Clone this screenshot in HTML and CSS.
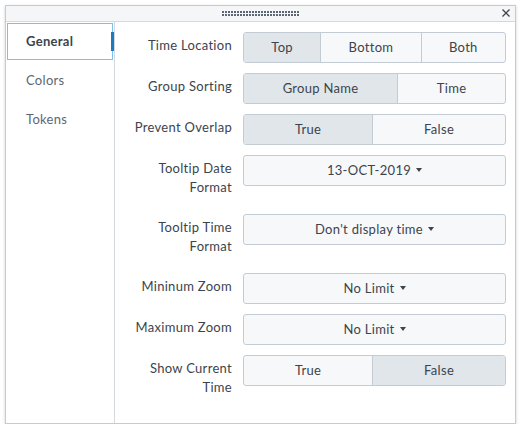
FILE: index.html
```html
<!DOCTYPE html>
<html>
<head>
<meta charset="utf-8">
<link rel="stylesheet" href="styles.css">
</head>
<body>
<div class="panel">
  <div class="header">
    <div class="grip"></div>
    <button class="close" aria-label="Close">
      <svg width="8" height="8" viewBox="0 0 8 8"><path d="M0.5 0.5 L7.5 7.5 M7.5 0.5 L0.5 7.5" stroke="#3c444d" stroke-width="1.3" fill="none"/></svg>
    </button>
  </div>
  <div class="body">
    <div class="sidebar">
      <div class="tab active">General</div>
      <div class="tab">Colors</div>
      <div class="tab">Tokens</div>
    </div>
    <div class="content">
      <div class="row">
        <div class="label">Time Location</div>
        <div class="group">
          <div class="opt selected">Top</div>
          <div class="opt">Bottom</div>
          <div class="opt">Both</div>
        </div>
      </div>
      <div class="row">
        <div class="label">Group Sorting</div>
        <div class="group">
          <div class="opt selected">Group Name</div>
          <div class="opt">Time</div>
        </div>
      </div>
      <div class="row">
        <div class="label">Prevent Overlap</div>
        <div class="group">
          <div class="opt selected">True</div>
          <div class="opt">False</div>
        </div>
      </div>
      <div class="row">
        <div class="label">Tooltip Date<br>Format</div>
        <div class="select">13-OCT-2019<span class="caret"></span></div>
      </div>
      <div class="row">
        <div class="label">Tooltip Time<br>Format</div>
        <div class="select">Don't display time<span class="caret"></span></div>
      </div>
      <div class="row">
        <div class="label">Mininum Zoom</div>
        <div class="select">No Limit<span class="caret"></span></div>
      </div>
      <div class="row">
        <div class="label">Maximum Zoom</div>
        <div class="select">No Limit<span class="caret"></span></div>
      </div>
      <div class="row">
        <div class="label">Show Current<br>Time</div>
        <div class="group">
          <div class="opt">True</div>
          <div class="opt selected">False</div>
        </div>
      </div>
    </div>
  </div>
</div>
</body>
</html>
```
FILE: styles.css
```css
html, body {
  margin: 0;
  padding: 0;
  background: #ffffff;
}
body {
  font-family: Lato, "Liberation Sans", sans-serif;
  font-size: 13px;
  letter-spacing: 0.3px;
  color: #3c444d;
}
.panel {
  box-sizing: border-box;
  margin: 5px 0 0 5px;
  width: 511px;
  height: 419px;
  border: 1px solid #c3cbd4;
  box-shadow: 0 1px 3px rgba(0, 0, 0, 0.18);
  background: #ffffff;
  display: flex;
  flex-direction: column;
}
.header {
  height: 15px;
  border-bottom: 1px solid #d3d9df;
  background: #f5f6f8;
  display: flex;
  align-items: center;
  justify-content: center;
  position: relative;
}
.grip {
  width: 78px;
  height: 6px;
  background-image: radial-gradient(circle at 1px 1px, #5c6773 0.75px, transparent 1px);
  background-size: 3px 3px;
}
.close {
  position: absolute;
  right: 5px;
  top: 3px;
  width: 8px;
  height: 8px;
  padding: 0;
  border: 0;
  background: none;
  display: flex;
}
.body {
  flex: 1;
  display: flex;
}
.sidebar {
  width: 108px;
  border-right: 1px solid #d3d9df;
  display: flex;
  flex-direction: column;
}
.tab {
  position: relative;
  margin: 1px;
  height: 37px;
  box-sizing: border-box;
  border: 1px solid transparent;
  padding: 0 0 2px 18px;
  display: flex;
  align-items: center;
  color: #5c6773;
}
.tab.active {
  border-color: #7cc0ee;
  color: #3c444d;
  font-weight: 700;
}
.tab.active::after {
  content: "";
  position: absolute;
  right: -2px;
  top: 8px;
  width: 3px;
  height: 19px;
  background: #1a7bbd;
}
.content {
  flex: 1;
  padding: 10px 9px 0 0;
  display: flex;
  flex-direction: column;
  gap: 10px;
}
.row {
  display: grid;
  grid-template-columns: 117px 1fr;
  column-gap: 11px;
  align-items: start;
}
.label {
  text-align: right;
  line-height: 19px;
  padding: 4px 0 7px;
  color: #3c444d;
}
.group, .select {
  box-sizing: border-box;
  height: 31px;
  border: 1px solid #c3cbd4;
  border-radius: 3px;
  background: #f7f8fa;
  overflow: hidden;
}
.group {
  display: flex;
}
.opt {
  flex: 1 1 auto;
  display: flex;
  align-items: center;
  justify-content: center;
  padding-bottom: 2px;
  color: #3c444d;
}
.opt + .opt {
  border-left: 1px solid #c3cbd4;
}
.opt.selected {
  background: #e1e6eb;
}
.select {
  display: flex;
  align-items: center;
  justify-content: center;
  padding-bottom: 2px;
  color: #3c444d;
}
.caret {
  display: inline-block;
  margin-left: 5px;
  width: 0;
  height: 0;
  border-top: 4px solid #3c444d;
  border-left: 3.5px solid transparent;
  border-right: 3.5px solid transparent;
}
```
